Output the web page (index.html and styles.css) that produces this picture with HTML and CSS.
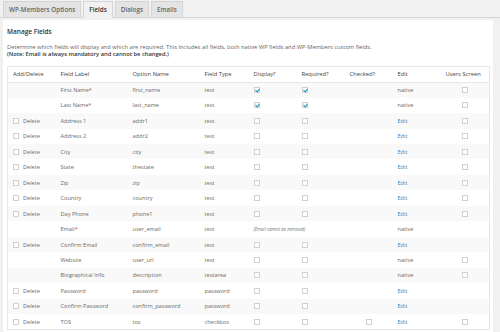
FILE: index.html
```html
<!DOCTYPE html>
<html>
<head>
<meta charset="utf-8">
<link rel="stylesheet" href="styles.css">
</head>
<body>
<div class="tabs">
  <span class="tab">WP-Members Options</span>
  <span class="tab active">Fields</span>
  <span class="tab">Dialogs</span>
  <span class="tab">Emails</span>
</div>
<div class="panel">
  <h3 class="title">Manage Fields</h3>
  <p class="desc">Determine which fields will display and which are required. This includes all fields, both native WP fields and WP-Members custom fields.<br><b>(Note: Email is always mandatory and cannot be changed.)</b></p>
  <table class="fields">
    <colgroup>
      <col class="c48"><col class="c72"><col class="c72"><col class="c49"><col class="c48"><col class="c48"><col class="c48"><col class="c48"><col class="c49">
    </colgroup>
    <thead>
      <tr><th>Add/Delete</th><th>Field Label</th><th>Option Name</th><th>Field Type</th><th>Display?</th><th>Required?</th><th>Checked?</th><th>Edit</th><th>Users Screen</th></tr>
    </thead>
    <tbody>
      <tr><td></td><td>First Name<span class="req">*</span></td><td>first_name</td><td>text</td><td><span class="cb on"></span></td><td><span class="cb on"></span></td><td></td><td>native</td><td class="ctr"><span class="cb"></span></td></tr>
      <tr><td></td><td>Last Name<span class="req">*</span></td><td>last_name</td><td>text</td><td><span class="cb on"></span></td><td><span class="cb on"></span></td><td></td><td>native</td><td class="ctr"><span class="cb"></span></td></tr>
      <tr><td><span class="cb"></span>Delete</td><td>Address 1</td><td>addr1</td><td>text</td><td><span class="cb"></span></td><td><span class="cb"></span></td><td></td><td><a>Edit</a></td><td class="ctr"><span class="cb"></span></td></tr>
      <tr><td><span class="cb"></span>Delete</td><td>Address 2</td><td>addr2</td><td>text</td><td><span class="cb"></span></td><td><span class="cb"></span></td><td></td><td><a>Edit</a></td><td class="ctr"><span class="cb"></span></td></tr>
      <tr><td><span class="cb"></span>Delete</td><td>City</td><td>city</td><td>text</td><td><span class="cb"></span></td><td><span class="cb"></span></td><td></td><td><a>Edit</a></td><td class="ctr"><span class="cb"></span></td></tr>
      <tr><td><span class="cb"></span>Delete</td><td>State</td><td>thestate</td><td>text</td><td><span class="cb"></span></td><td><span class="cb"></span></td><td></td><td><a>Edit</a></td><td class="ctr"><span class="cb"></span></td></tr>
      <tr><td><span class="cb"></span>Delete</td><td>Zip</td><td>zip</td><td>text</td><td><span class="cb"></span></td><td><span class="cb"></span></td><td></td><td><a>Edit</a></td><td class="ctr"><span class="cb"></span></td></tr>
      <tr><td><span class="cb"></span>Delete</td><td>Country</td><td>country</td><td>text</td><td><span class="cb"></span></td><td><span class="cb"></span></td><td></td><td><a>Edit</a></td><td class="ctr"><span class="cb"></span></td></tr>
      <tr><td><span class="cb"></span>Delete</td><td>Day Phone</td><td>phone1</td><td>text</td><td><span class="cb"></span></td><td><span class="cb"></span></td><td></td><td><a>Edit</a></td><td class="ctr"><span class="cb"></span></td></tr>
      <tr><td></td><td>Email<span class="req">*</span></td><td>user_email</td><td>text</td><td colspan="3"><i class="note">(Email cannot be removed)</i></td><td>native</td><td></td></tr>
      <tr><td><span class="cb"></span>Delete</td><td>Confirm Email</td><td>confirm_email</td><td>text</td><td><span class="cb"></span></td><td><span class="cb"></span></td><td></td><td><a>Edit</a></td><td></td></tr>
      <tr><td></td><td>Website</td><td>user_url</td><td>text</td><td><span class="cb"></span></td><td><span class="cb"></span></td><td></td><td>native</td><td class="ctr"><span class="cb"></span></td></tr>
      <tr><td></td><td>Biographical Info</td><td>description</td><td>textarea</td><td><span class="cb"></span></td><td><span class="cb"></span></td><td></td><td>native</td><td class="ctr"><span class="cb"></span></td></tr>
      <tr><td><span class="cb"></span>Delete</td><td>Password</td><td>password</td><td>password</td><td><span class="cb"></span></td><td><span class="cb"></span></td><td></td><td><a>Edit</a></td><td></td></tr>
      <tr><td><span class="cb"></span>Delete</td><td>Confirm Password</td><td>confirm_password</td><td>password</td><td><span class="cb"></span></td><td><span class="cb"></span></td><td></td><td><a>Edit</a></td><td></td></tr>
      <tr><td><span class="cb"></span>Delete</td><td>TOS</td><td>tos</td><td>checkbox</td><td><span class="cb"></span></td><td><span class="cb"></span></td><td class="ctr"><span class="cb"></span></td><td><a>Edit</a></td><td class="ctr"><span class="cb"></span></td></tr>
    </tbody>
  </table>
</div>
</body>
</html>
```
FILE: styles.css
```css
* { box-sizing: border-box; }
html, body { margin: 0; padding: 0; }
body {
  background: #f1f1f1;
  font-family: "Open Sans", "Noto Sans", sans-serif;
  color: #666;
  width: 500px;
  height: 332px;
  overflow: hidden;
}
.tabs {
  display: flex;
  align-items: flex-end;
  gap: 2px;
  height: 18px;
  padding: 1px 0 0 3px;
  border-bottom: 1px solid #d4d4d4;
}
.tab {
  display: flex;
  align-items: center;
  height: 17px;
  margin-bottom: -1px;
  padding: 0 5px;
  background: #e4e4e4;
  border: 1px solid #d4d4d4;
  font-size: 6.3px;
  font-weight: 600;
  color: #666;
}
.tab.active {
  background: #f1f1f1;
  border-bottom-color: #f1f1f1;
  color: #333;
}
.panel {
  margin: 2px 7px 0 3px;
  background: #fff;
  padding: 6px 4px 0;
  height: 320px;
}
.title {
  margin: 0;
  font-size: 6.5px;
  font-weight: 600;
  color: #333;
  line-height: 9px;
  padding-top: 1px;
}
.desc {
  margin: 8px 0 0;
  font-size: 5.75px;
  line-height: 7.3px;
  color: #666;
}
.desc b { font-weight: 600; color: #333; }
.fields {
  margin-top: 7px;
  width: 482px;
  border-collapse: collapse;
  table-layout: fixed;
  border: 1px solid #e8e8e8;
  font-size: 5.6px;
}
.c48 { width: 48px; }
.c49 { width: 49px; }
.c72 { width: 72px; }
.fields th {
  text-align: left;
  font-weight: 400;
  color: #444;
  height: 16px;
  padding: 0 0 0 5px;
  border-bottom: 1px solid #e8e8e8;
  font-size: 5.8px;
}
.fields td {
  height: 15.47px;
  padding: 0 0 0 5px;
  white-space: nowrap;
  vertical-align: middle;
  color: #6a6a6a;
}
.fields tbody tr:nth-child(odd) { background: #f9f9f9; }
.fields td.ctr { text-align: center; padding: 0; }
.cb {
  display: inline-block;
  width: 6px;
  height: 6px;
  border: 1px solid #cfd2d5;
  background: #fff;
  vertical-align: -1px;
  margin-right: 4px;
  position: relative;
}
.ctr .cb { margin-right: 0; }
.cb.on::after {
  content: "";
  position: absolute;
  left: 1px;
  top: 0px;
  width: 2px;
  height: 3px;
  border-right: 1px solid #1e8cbe;
  border-bottom: 1px solid #1e8cbe;
  transform: rotate(40deg);
}
.req { color: #d54e21; }
.fields a { color: #2a8bc4; }
.note { font-size: 4.4px; color: #777; }
```
